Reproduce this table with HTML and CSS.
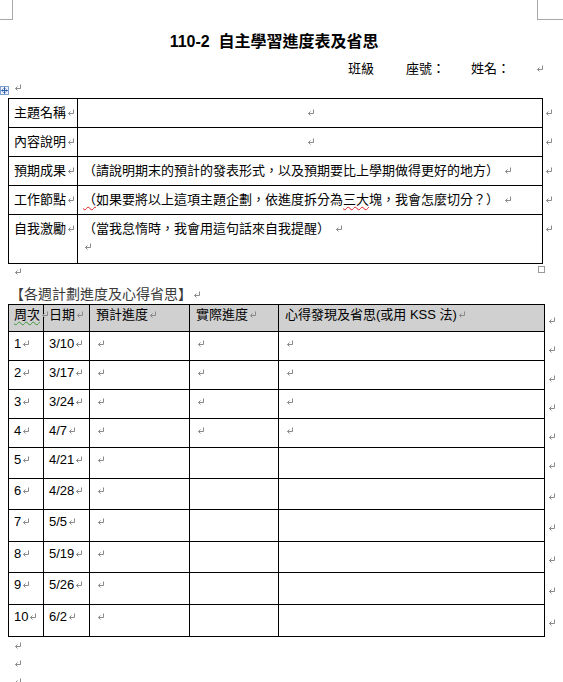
FILE: index.html
```html
<!DOCTYPE html>
<html lang="zh-Hant">
<head>
<meta charset="utf-8">
<title>110-2 自主學習進度表及省思</title>
<link rel="stylesheet" href="styles.css">
</head>
<body>
<svg class="defs" aria-hidden="true">
  <symbol id="ret" viewBox="0 0 8 8">
    <path d="M6.5 0.5V4.5H1.5M3.5 2.5L1.5 4.5L3.5 6.5" fill="none" stroke="#8a8a8a" stroke-width="1"/>
  </symbol>
</svg>
<div class="page">
  <div class="marks"><div class="mark-l"></div><div class="mark-r"></div></div>
  <h1 class="title">110-2&nbsp; 自主學習進度表及省思<span class="tiny">.</span></h1>
  <div class="info">
    <span>班級</span><span>座號：</span><span>姓名：</span><svg class="pm"><use href="#ret"/></svg>
  </div>
  <div class="handle-row">
    <svg class="handle" viewBox="0 0 9 9"><rect x="0.5" y="0.5" width="8" height="8" fill="#eef3fb" stroke="#7f9fcf"/><path d="M4.5 1.5V7.5M1.5 4.5H7.5M3.5 2.5L4.5 1.5L5.5 2.5M3.5 6.5L4.5 7.5L5.5 6.5M2.5 3.5L1.5 4.5L2.5 5.5M6.5 3.5L7.5 4.5L6.5 5.5" fill="none" stroke="#2d5fa8" stroke-width="1"/></svg>
    <svg class="pm"><use href="#ret"/></svg>
  </div>
  <table class="t t1">
    <colgroup><col class="c1a"><col class="c1b"><col class="ceor"></colgroup>
    <tr class="r1"><td>主題名稱<svg class="pm"><use href="#ret"/></svg></td><td class="ctr"><svg class="pm"><use href="#ret"/></svg></td><td class="eor"><svg class="pm"><use href="#ret"/></svg></td></tr>
    <tr class="r1"><td>內容說明<svg class="pm"><use href="#ret"/></svg></td><td class="ctr"><svg class="pm"><use href="#ret"/></svg></td><td class="eor"><svg class="pm"><use href="#ret"/></svg></td></tr>
    <tr class="r1"><td>預期成果<svg class="pm"><use href="#ret"/></svg></td><td>（請說明期末的預計的發表形式，以及預期要比上學期做得更好的地方） <svg class="pm"><use href="#ret"/></svg></td><td class="eor"><svg class="pm"><use href="#ret"/></svg></td></tr>
    <tr class="r1"><td>工作節點<svg class="pm"><use href="#ret"/></svg></td><td><span class="sp">（</span>如果要將以上這項主題企劃，依進度拆分為<span class="sp">三大</span>塊，我會怎麼切分？） <svg class="pm"><use href="#ret"/></svg></td><td class="eor"><svg class="pm"><use href="#ret"/></svg></td></tr>
    <tr class="r2"><td>自我激勵<svg class="pm"><use href="#ret"/></svg></td><td>（當我怠惰時，我會用這句話來自我提醒） <svg class="pm"><use href="#ret"/></svg><br><svg class="pm"><use href="#ret"/></svg></td><td class="eor"><svg class="pm"><use href="#ret"/></svg></td></tr>
  </table>
  <div class="para between"><svg class="pm"><use href="#ret"/></svg><span class="rsz"></span></div>
  <div class="para sect">【各週計劃進度及心得省思】<svg class="pm"><use href="#ret"/></svg></div>
  <table class="t t2">
    <colgroup><col class="c2a"><col class="c2b"><col class="c2c"><col class="c2d"><col class="c2e"><col class="ceor2"></colgroup>
    <tr class="hd"><td><span class="gr">周次</span><svg class="pm"><use href="#ret"/></svg></td><td>日期<svg class="pm"><use href="#ret"/></svg></td><td>預計進度<svg class="pm"><use href="#ret"/></svg></td><td>實際進度<svg class="pm"><use href="#ret"/></svg></td><td>心得發現及省思(或用 KSS 法)<svg class="pm"><use href="#ret"/></svg></td><td class="eor"><svg class="pm"><use href="#ret"/></svg></td></tr>
    <tr class="h29"><td>1<svg class="pm"><use href="#ret"/></svg></td><td>3/10<svg class="pm"><use href="#ret"/></svg></td><td><svg class="pm"><use href="#ret"/></svg></td><td><svg class="pm"><use href="#ret"/></svg></td><td><svg class="pm"><use href="#ret"/></svg></td><td class="eor"><svg class="pm"><use href="#ret"/></svg></td></tr>
    <tr class="h29"><td>2<svg class="pm"><use href="#ret"/></svg></td><td>3/17<svg class="pm"><use href="#ret"/></svg></td><td><svg class="pm"><use href="#ret"/></svg></td><td><svg class="pm"><use href="#ret"/></svg></td><td><svg class="pm"><use href="#ret"/></svg></td><td class="eor"><svg class="pm"><use href="#ret"/></svg></td></tr>
    <tr class="h29"><td>3<svg class="pm"><use href="#ret"/></svg></td><td>3/24<svg class="pm"><use href="#ret"/></svg></td><td><svg class="pm"><use href="#ret"/></svg></td><td><svg class="pm"><use href="#ret"/></svg></td><td><svg class="pm"><use href="#ret"/></svg></td><td class="eor"><svg class="pm"><use href="#ret"/></svg></td></tr>
    <tr class="h29"><td>4<svg class="pm"><use href="#ret"/></svg></td><td>4/7<svg class="pm"><use href="#ret"/></svg></td><td><svg class="pm"><use href="#ret"/></svg></td><td><svg class="pm"><use href="#ret"/></svg></td><td><svg class="pm"><use href="#ret"/></svg></td><td class="eor"><svg class="pm"><use href="#ret"/></svg></td></tr>
    <tr class="h31"><td>5<svg class="pm"><use href="#ret"/></svg></td><td>4/21<svg class="pm"><use href="#ret"/></svg></td><td><svg class="pm"><use href="#ret"/></svg></td><td></td><td></td><td class="eor"><svg class="pm"><use href="#ret"/></svg></td></tr>
    <tr class="h31"><td>6<svg class="pm"><use href="#ret"/></svg></td><td>4/28<svg class="pm"><use href="#ret"/></svg></td><td><svg class="pm"><use href="#ret"/></svg></td><td></td><td></td><td class="eor"><svg class="pm"><use href="#ret"/></svg></td></tr>
    <tr class="h32"><td>7<svg class="pm"><use href="#ret"/></svg></td><td>5/5<svg class="pm"><use href="#ret"/></svg></td><td><svg class="pm"><use href="#ret"/></svg></td><td></td><td></td><td class="eor"><svg class="pm"><use href="#ret"/></svg></td></tr>
    <tr class="h31"><td>8<svg class="pm"><use href="#ret"/></svg></td><td>5/19<svg class="pm"><use href="#ret"/></svg></td><td><svg class="pm"><use href="#ret"/></svg></td><td></td><td></td><td class="eor"><svg class="pm"><use href="#ret"/></svg></td></tr>
    <tr class="h32"><td>9<svg class="pm"><use href="#ret"/></svg></td><td>5/26<svg class="pm"><use href="#ret"/></svg></td><td><svg class="pm"><use href="#ret"/></svg></td><td></td><td></td><td class="eor"><svg class="pm"><use href="#ret"/></svg></td></tr>
    <tr class="h32"><td>10<svg class="pm"><use href="#ret"/></svg></td><td>6/2<svg class="pm"><use href="#ret"/></svg></td><td><svg class="pm"><use href="#ret"/></svg></td><td></td><td></td><td class="eor"><svg class="pm"><use href="#ret"/></svg></td></tr>
  </table>
  <div class="para tail"><svg class="pm"><use href="#ret"/></svg></div>
  <div class="para tail"><svg class="pm"><use href="#ret"/></svg></div>
  <div class="para tail"><svg class="pm"><use href="#ret"/></svg></div>
</div>
</body>
</html>
```
FILE: styles.css
```css
html, body {
  margin: 0;
  padding: 0;
  background: #fff;
}
body {
  font-family: "Liberation Sans", "Noto Sans CJK TC", sans-serif;
  font-size: 13px;
  color: #000;
  overflow: hidden;
}
.defs {
  position: absolute;
  width: 0;
  height: 0;
  overflow: hidden;
}
.page {
  width: 563px;
}
.pm {
  width: 8px;
  height: 8px;
  margin-left: 1px;
  vertical-align: 0;
}
.marks {
  display: flex;
  justify-content: space-between;
  height: 20px;
}
.mark-l {
  width: 13px;
  height: 20px;
  box-sizing: border-box;
  border-right: 1px solid #a8a8a8;
  border-bottom: 1px solid #a8a8a8;
}
.mark-r {
  width: 26px;
  height: 20px;
  box-sizing: border-box;
  border-left: 1px solid #a8a8a8;
  border-bottom: 1px solid #a8a8a8;
}
.title {
  margin: 11px 0 0 8px;
  width: 534px;
  height: 22px;
  text-align: center;
  font-size: 16px;
  line-height: 22px;
  font-weight: bold;
}
.tiny {
  font-size: 6px;
  font-weight: normal;
  color: #999;
}
.info {
  display: flex;
  align-items: center;
  height: 18px;
  line-height: 18px;
  margin-top: 7px;
  padding-left: 348px;
  gap: 31px;
}
.info span:nth-child(2) { margin-left: 1px; }
.info span:nth-child(3) { margin-left: -5px; }
.info .pm { margin-left: -5px; }
.handle-row {
  display: flex;
  align-items: flex-start;
  height: 20px;
}
.handle {
  width: 9px;
  height: 9px;
  margin-top: 8px;
}
.handle-row .pm {
  margin: 6px 0 0 5px;
}
.t {
  border-collapse: collapse;
  table-layout: fixed;
  margin-left: 8px;
}
.t1 { width: 552px; }
.t2 { width: 554px; }
.t td {
  border: 1px solid #000;
  padding: 5px 5px 0;
  vertical-align: top;
  line-height: 17px;
  white-space: nowrap;
  overflow: visible;
}
.t td.eor {
  border: none;
  padding: 5px 0 0 1px;
}
.t td.ctr {
  text-align: center;
}
.c1a { width: 69px; }
.c1b { width: 465px; }
.ceor { width: 18px; }
.ceor2 { width: 18px; }
.t1 tr.r1 { height: 29px; }
.t1 tr.r2 { height: 49px; }
.t1 tr.r2 td { line-height: 18px; }
.sp {
  text-decoration: underline wavy #e02020;
  text-decoration-thickness: 1px;
  text-underline-offset: 2px;
}
.gr {
  text-decoration: underline wavy #3a9a3a;
  text-decoration-thickness: 1px;
  text-underline-offset: 2px;
}
.para {
  height: 20px;
  line-height: 20px;
  padding-left: 13px;
}
.between {
  display: flex;
  justify-content: space-between;
  align-items: flex-start;
  width: 532px;
}
.between .pm { margin-top: 4px; }
.rsz {
  width: 5px;
  height: 5px;
  margin-top: 2px;
  border: 1px solid #9a9a9a;
}
.sect {
  padding-left: 10px;
  font-size: 14px;
  color: #3a3a3a;
}
.c2a { width: 35px; }
.c2b { width: 46px; }
.c2c { width: 100px; }
.c2d { width: 89px; }
.c2e { width: 266px; }
.t2 tr.hd { height: 27px; }
.t2 tr.hd td { padding-top: 1px; }
.t2 tr.hd td:not(.eor) { background: #d0d0d0; }
.t2 td { padding-top: 3px; }
.t2 td:nth-child(3), .t2 td:nth-child(4), .t2 td:nth-child(5) { padding-left: 6px; }
.t2 tr.h29 { height: 29px; }
.t2 tr.h31 { height: 31px; }
.t2 tr.h32 { height: 32px; }
.t2 tr td.eor { padding-top: 9px; padding-left: 2px; }
.t2 tr.hd td.eor { padding-top: 7px; }
.tail { height: 18px; line-height: 18px; }
```
